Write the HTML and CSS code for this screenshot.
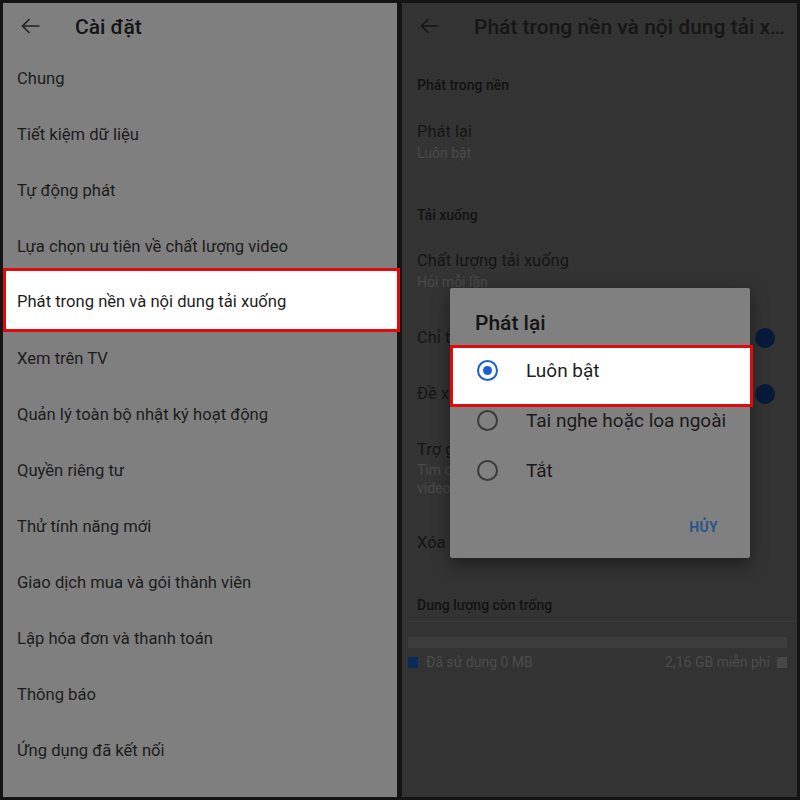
FILE: index.html
```
<!DOCTYPE html>
<html lang="vi">
<head>
<meta charset="utf-8">
<title>Cài đặt</title>
<link rel="stylesheet" href="styles.css">
</head>
<body>
  <section class="panel panel-left">
    <header class="topbar">
      <svg class="back" width="19" height="16" viewBox="0 0 19 16"><path d="M8.5 1 L1.5 8 L8.5 15 M1.5 8 H18.5" fill="none" stroke="currentColor" stroke-width="1.6"/></svg>
      <h1 class="title">Cài đặt</h1>
    </header>
    <ul class="menu">
      <li class="menu-item">Chung</li>
      <li class="menu-item">Tiết kiệm dữ liệu</li>
      <li class="menu-item">Tự động phát</li>
      <li class="menu-item">Lựa chọn ưu tiên về chất lượng video</li>
      <li class="menu-item menu-item-hl">Phát trong nền và nội dung tải xuống</li>
      <li class="menu-item">Xem trên TV</li>
      <li class="menu-item">Quản lý toàn bộ nhật ký hoạt động</li>
      <li class="menu-item">Quyền riêng tư</li>
      <li class="menu-item">Thử tính năng mới</li>
      <li class="menu-item">Giao dịch mua và gói thành viên</li>
      <li class="menu-item">Lập hóa đơn và thanh toán</li>
      <li class="menu-item">Thông báo</li>
      <li class="menu-item">Ứng dụng đã kết nối</li>
    </ul>
  </section>

  <section class="panel panel-right">
    <header class="topbar">
      <svg class="back" width="19" height="16" viewBox="0 0 19 16"><path d="M8.5 1 L1.5 8 L8.5 15 M1.5 8 H18.5" fill="none" stroke="currentColor" stroke-width="1.6"/></svg>
      <h1 class="title title-clip">Phát trong nền và nội dung tải xuống</h1>
    </header>

    <div class="sec sec-first">Phát trong nền</div>
    <div class="row row-2l row-a">
      <div class="row-text">
        <div class="row-title">Phát lại</div>
        <div class="row-sub">Luôn bật</div>
      </div>
    </div>

    <div class="sec sec-second">Tải xuống</div>
    <div class="row row-2l row-b">
      <div class="row-text">
        <div class="row-title">Chất lượng tải xuống</div>
        <div class="row-sub">Hỏi mỗi lần</div>
      </div>
    </div>
    <div class="row row-1l">
      <div class="row-title">Chỉ tải xuống qua Wi-Fi</div>
      <span class="toggle"></span>
    </div>
    <div class="row row-1l">
      <div class="row-title">Đề xuất nội dung tải xuống</div>
      <span class="toggle"></span>
    </div>
    <div class="row row-3l">
      <div class="row-text">
        <div class="row-title">Trợ giúp tải xuống thông minh</div>
        <div class="row-sub row-sub-lines"><span>Tìm các đề xuất phù hợp để tự động tải xuống trong</span><span>video của bạn ở chế độ nền</span></div>
      </div>
    </div>
    <div class="row row-1l">
      <div class="row-title">Xóa tất cả nội dung tải xuống</div>
    </div>

    <div class="sec sec-storage">Dung lượng còn trống</div>
    <div class="storage">
      <div class="bar"></div>
      <div class="legend">
        <span class="sq sq-used"></span>
        <span class="legend-text">Đã sử dụng 0 MB</span>
        <span class="legend-fill"></span>
        <span class="legend-text">2,16 GB miễn phí</span>
        <span class="sq sq-free"></span>
      </div>
    </div>

    <div class="dialog">
      <div class="dialog-title">Phát lại</div>
      <div class="opt opt-hl">
        <span class="radio radio-on"></span>
        <span class="opt-label">Luôn bật</span>
      </div>
      <div class="opt">
        <span class="radio"></span>
        <span class="opt-label">Tai nghe hoặc loa ngoài</span>
      </div>
      <div class="opt">
        <span class="radio"></span>
        <span class="opt-label">Tắt</span>
      </div>
      <div class="dialog-actions">
        <span class="btn">HỦY</span>
      </div>
    </div>
  </section>
</body>
</html>
```

FILE: styles.css
```
* { box-sizing: border-box; }
html, body { margin: 0; padding: 0; }
body {
  width: 800px;
  height: 800px;
  background: #141414;
  padding: 3px;
  display: flex;
  gap: 5px;
  font-family: Roboto, "Noto Sans", "DejaVu Sans", sans-serif;
  overflow: hidden;
}
.panel {
  height: 794px;
  display: flex;
  flex-direction: column;
  position: relative;
}
.panel-left { width: 394px; background: #7f7f7f; color: #1c1c1c; }
.panel-right { width: 395px; background: #333333; color: #141414; }

.topbar {
  height: 47px;
  display: flex;
  align-items: center;
  padding-left: 18px;
  flex-shrink: 0;
}
.panel-left .topbar { color: #222; }
.panel-right .topbar { color: #161616; }
.back { flex-shrink: 0; margin-top: -2px; }
.title {
  margin: 0 0 0 35px;
  font-size: 21px;
  font-weight: 500;
  white-space: nowrap;
}
.panel-left .title { color: #141414; }
.title-clip {
  overflow: hidden;
  text-overflow: ellipsis;
  width: 314px;
}

.menu { list-style: none; margin: 0; padding: 0; }
.menu-item {
  height: 56px;
  display: flex;
  align-items: center;
  padding-left: 14px;
  font-size: 16.6px;
  white-space: nowrap;
}
.menu-item-hl {
  height: 64px;
  margin: -6px -3px -2px 0;
  background: #ffffff;
  border: 3px solid #e20a0a;
  padding-left: 11px;
  padding-top: 2px;
  color: #1e1e1e;
}

.sec {
  font-size: 14px;
  font-weight: 500;
  line-height: 20px;
  padding: 0 15px;
  color: #121212;
}
.sec-first { padding-top: 25px; }
.sec-second { padding-top: 42px; }
.sec-storage {
  padding-top: 24px;
  padding-bottom: 6px;
  border-bottom: 1px solid #3b3b3b;
  margin-left: 6px;
  padding-left: 9px;
}

.row {
  display: flex;
  align-items: center;
  padding: 0 22px 0 15px;
}
.row-text { flex: 1; }
.row-title { font-size: 16.5px; line-height: 22px; white-space: nowrap; flex: 1; color: #151515; }
.row-sub { font-size: 14px; line-height: 20px; color: #4a4a4a; }
.row-sub-lines { line-height: 18px; display: flex; flex-direction: column; white-space: nowrap; }
.row-a { padding-top: 26px; }
.row-b { padding-top: 25px; padding-bottom: 18px; }
.row-1l { height: 56px; }
.row-3l { padding-top: 17px; padding-bottom: 18px; }

.toggle {
  width: 20px;
  height: 20px;
  border-radius: 50%;
  background: #081a3a;
  flex-shrink: 0;
}

.storage { padding: 15px 10px 0 6px; }
.bar { height: 11px; background: #3d3d3d; }
.legend {
  display: flex;
  align-items: center;
  margin-top: 4px;
  height: 20px;
  font-size: 14px;
  color: #4c4c4c;
}
.sq { width: 10px; height: 11px; flex-shrink: 0; }
.sq-used { background: #0a2a5a; margin-right: 8px; }
.sq-free { background: #474747; margin-left: 7px; }
.legend-fill { flex: 1; }

.dialog {
  position: absolute;
  left: 48px;
  top: 285px;
  width: 300px;
  background: #808080;
  box-shadow: 0 6px 18px rgba(0, 0, 0, 0.45);
  padding-top: 23px;
  border-radius: 2px;
}
.dialog-title {
  font-size: 21px;
  font-weight: 500;
  line-height: 24px;
  padding-left: 25px;
  margin-bottom: 10px;
  color: #141414;
}
.opt {
  height: 50px;
  display: flex;
  align-items: center;
  padding-left: 27px;
  font-size: 19px;
  color: #1a1a1a;
  position: relative;
}
.opt-hl {
  height: 62px;
  margin: 0 -3px -12px 0;
  background: #ffffff;
  border: 3px solid #e20a0a;
  padding-left: 24px;
  padding-bottom: 12px;
  padding-top: 0;
  color: #1e1e1e;
}
.radio {
  width: 21px;
  height: 21px;
  border-radius: 50%;
  border: 2px solid #3a3a3a;
  flex-shrink: 0;
  margin-right: 28px;
  display: flex;
  align-items: center;
  justify-content: center;
}
.radio-on { border: 2.5px solid #1a5fd0; }
.radio-on::after {
  content: "";
  width: 9px;
  height: 9px;
  border-radius: 50%;
  background: #1a5fd0;
}
.dialog-actions {
  display: flex;
  justify-content: flex-end;
  padding: 14px 24px 13px 0;
}
.btn {
  font-size: 14px;
  font-weight: 700;
  letter-spacing: 0.3px;
  color: #2b5489;
  height: 36px;
  line-height: 36px;
  padding: 0 8px;
}
```
